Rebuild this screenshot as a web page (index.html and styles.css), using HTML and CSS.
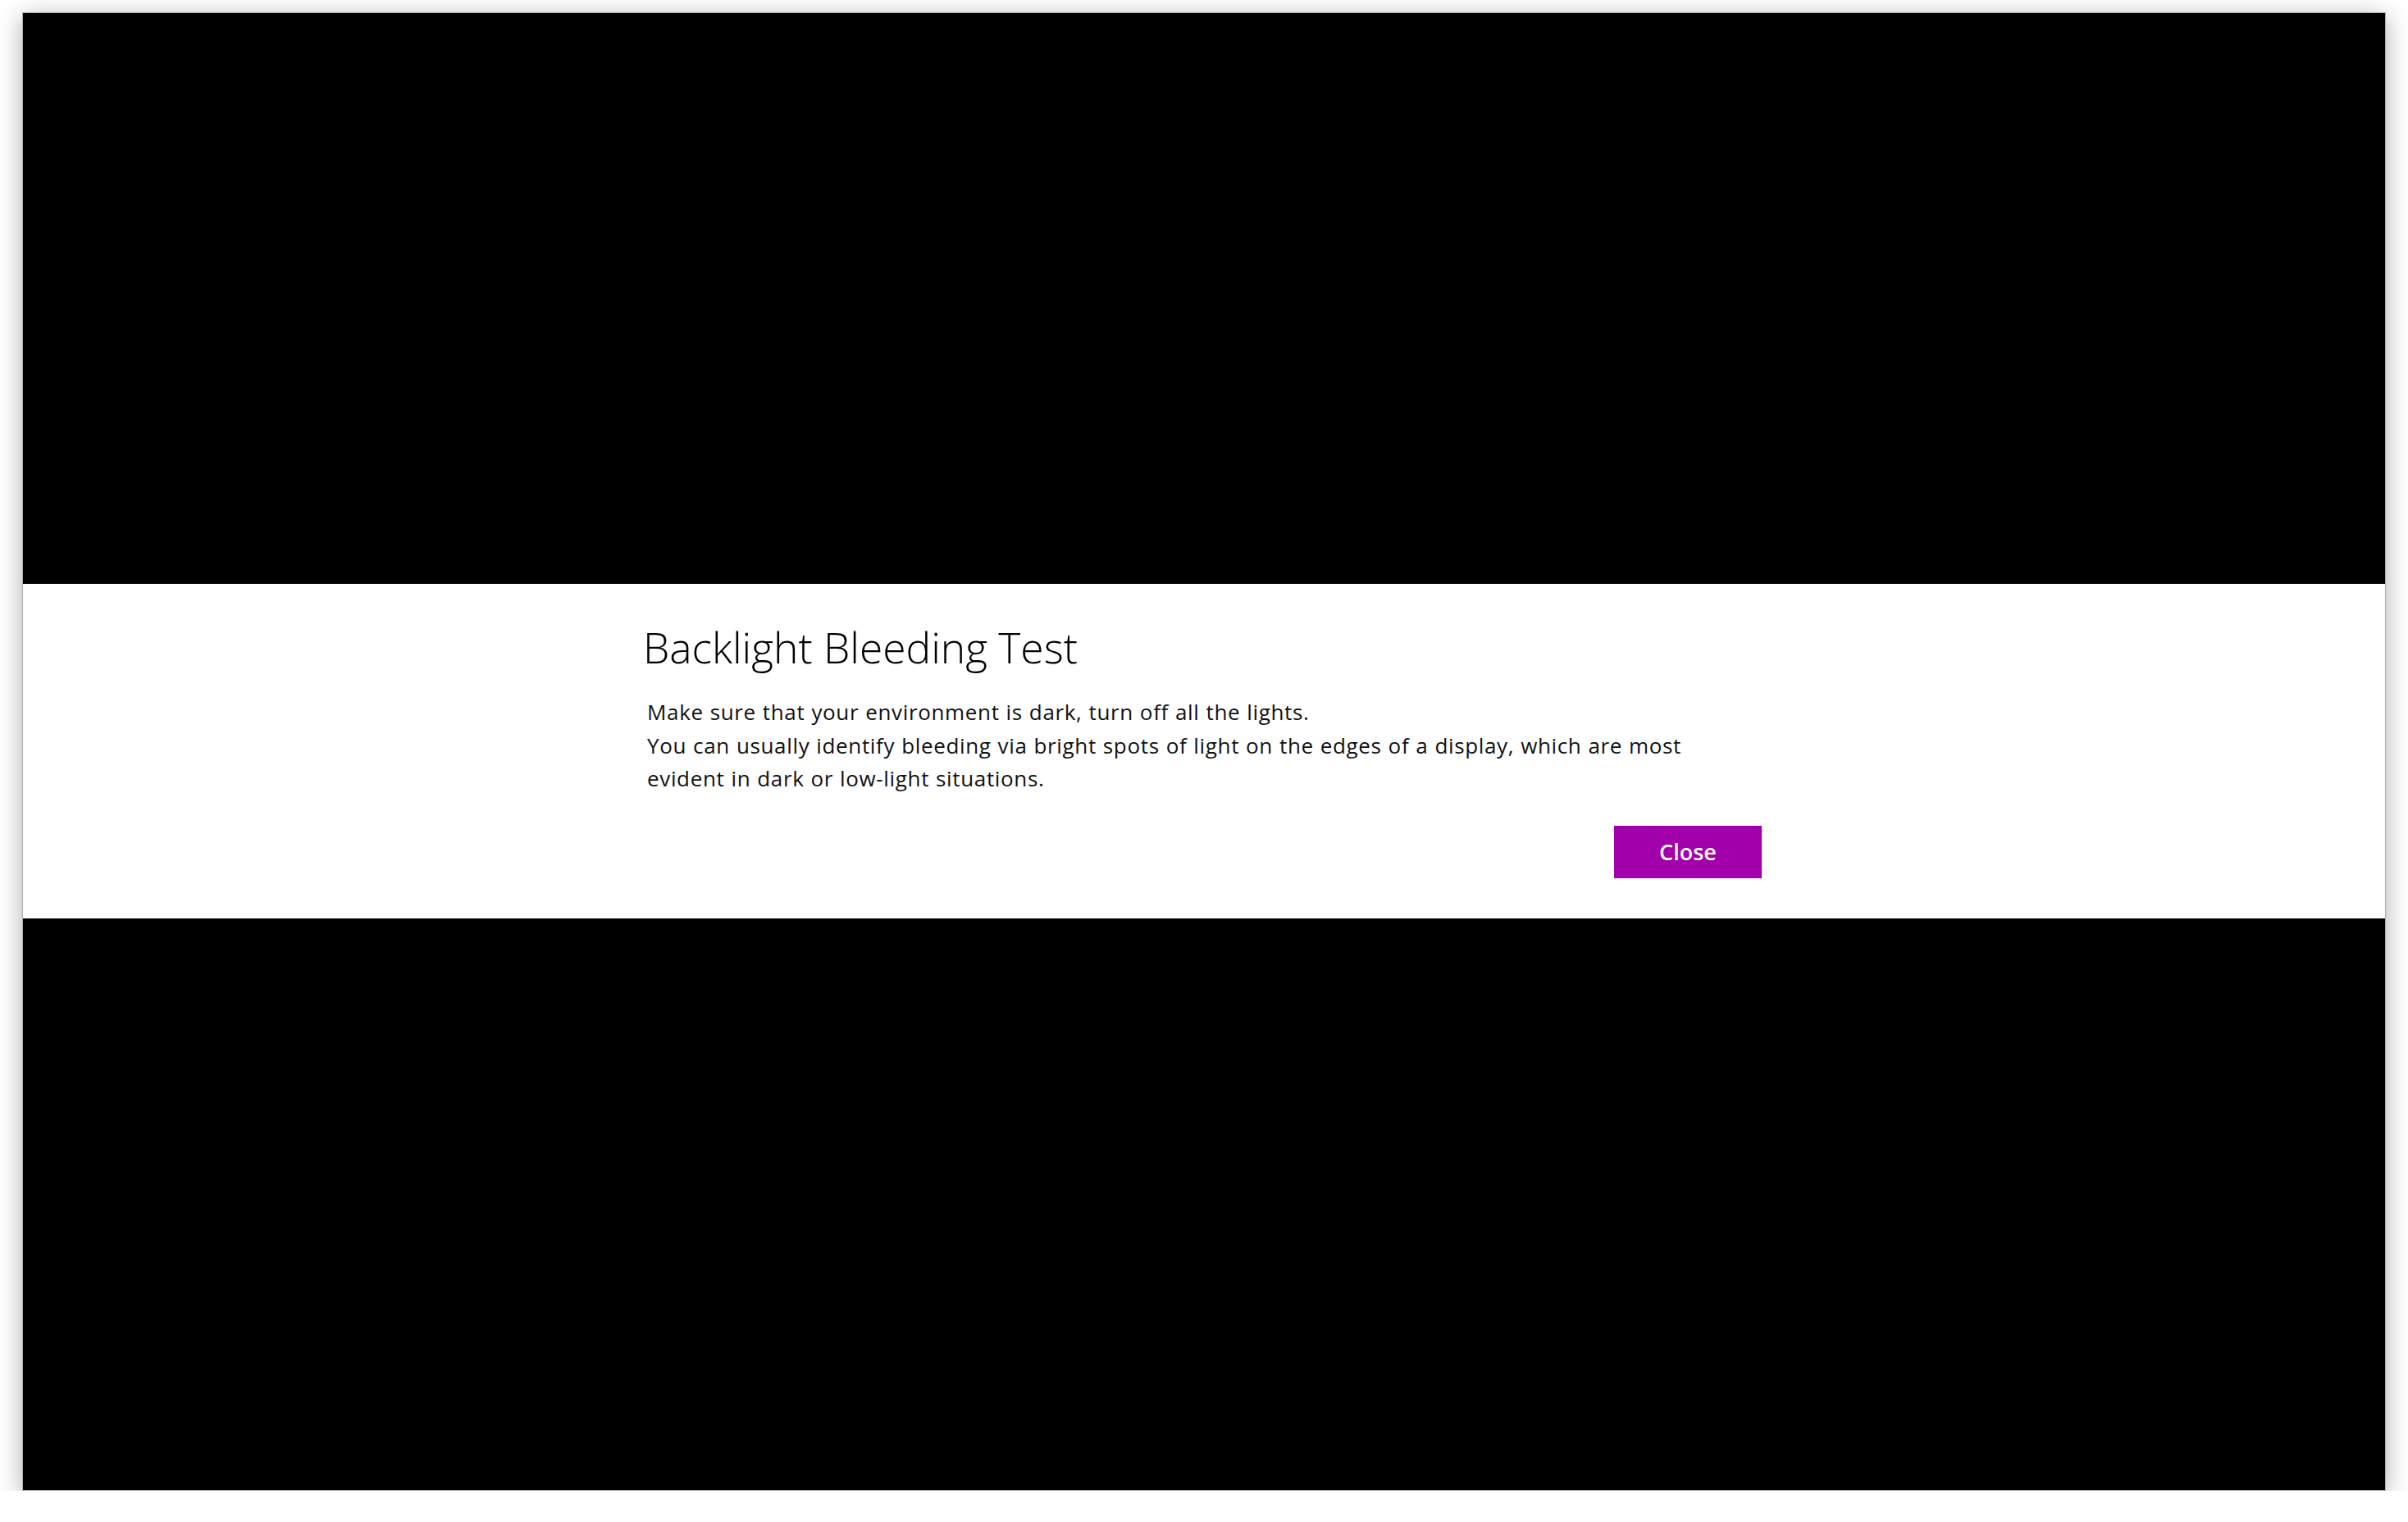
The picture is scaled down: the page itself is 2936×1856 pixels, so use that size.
FILE: index.html
```html
<!DOCTYPE html>
<html lang="en">
<head>
<meta charset="utf-8">
<title>Backlight Bleeding Test</title>
<link rel="stylesheet" href="styles.css">
</head>
<body>
<div class="desktop">
  <div class="window">
    <div class="black black-top"></div>
    <div class="band">
      <div class="dialog">
        <h1 class="title">Backlight Bleeding Test</h1>
        <p class="message">
          <span class="line">Make sure that your environment is dark, turn off all the lights.</span>
          <span class="line">You can usually identify bleeding via bright spots of light on the edges of a display, which are most</span>
          <span class="line">evident in dark or low-light situations.</span>
        </p>
        <div class="actions">
          <button class="btn" type="button">Close</button>
        </div>
      </div>
    </div>
    <div class="black black-bottom"></div>
  </div>
</div>
</body>
</html>
```

FILE: styles.css
```css
html, body {
  margin: 0;
  padding: 0;
  background: #ffffff;
}

body {
  font-family: "Open Sans", "Noto Sans", "Liberation Sans", sans-serif;
  color: #000;
}

.desktop {
  padding: 15px 0 0 27px;
  width: 2882px;
}

.window {
  width: 2880px;
  height: 1801px;
  border: 1px solid #adadad;
  box-shadow: 0 6px 28px rgba(0, 0, 0, 0.32);
  display: flex;
  flex-direction: column;
  background: #000;
}

.black {
  background: #000;
}

.black-top {
  height: 696px;
}

.black-bottom {
  height: 697px;
}

.band {
  height: 408px;
  background: #ffffff;
  padding-right: 4px;
}

.dialog {
  width: 1364px;
  margin: 0 auto;
  padding-top: 47px;
}

.title {
  margin: 0;
  font-size: 51.5px;
  line-height: 60px;
  font-weight: 300;
  color: #000;
  white-space: nowrap;
}

.message {
  margin: 29px 0 0 5px;
  font-size: 26px;
  line-height: 40.5px;
  font-weight: 400;
  letter-spacing: 0.65px;
  word-spacing: 0.6px;
  color: #111;
}

.line {
  display: block;
  white-space: nowrap;
}

.actions {
  display: flex;
  justify-content: flex-end;
  margin-top: 37px;
}

.btn {
  width: 180px;
  height: 64px;
  border: none;
  padding: 0;
  background: #a100aa;
  color: #fff;
  font-family: "Open Sans", "Noto Sans", sans-serif;
  font-size: 27px;
  font-weight: 600;
}
```
